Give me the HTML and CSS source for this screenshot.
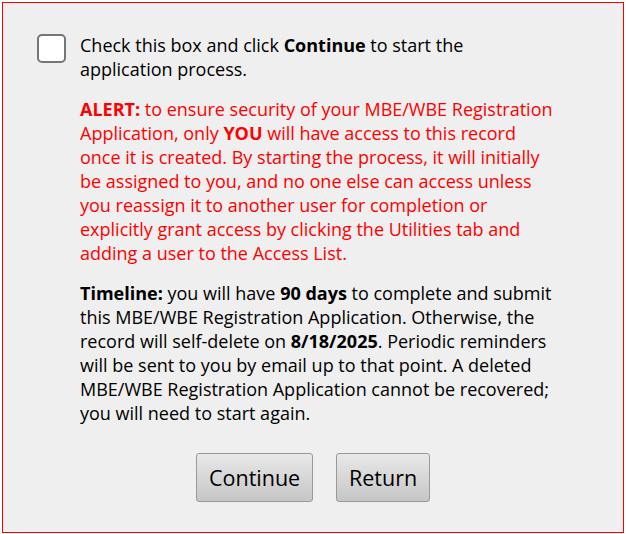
FILE: index.html
```html
<!DOCTYPE html>
<html>
<head>
<meta charset="utf-8">
<link rel="stylesheet" href="styles.css">
</head>
<body>
<div class="panel">
  <div class="row">
    <span class="check" role="checkbox" aria-checked="false"></span>
    <div class="content">
      <p>Check this box and click <b>Continue</b> to start the application process.</p>
      <p class="alert"><b>ALERT:</b> to ensure security of your MBE/WBE Registration Application, only <b>YOU</b> will have access to this record once it is created. By starting the process, it will initially be assigned to you, and no one else can access unless you reassign it to another user for completion or explicitly grant access by clicking the Utilities tab and adding a user to the Access List.</p>
      <p><b>Timeline:</b> you will have <b>90 days</b> to complete and submit this MBE/WBE Registration Application. Otherwise, the record will self-delete on <b>8/18/2025</b>. Periodic reminders will be sent to you by email up to that point. A deleted MBE/WBE Registration Application cannot be recovered; you will need to start again.</p>
    </div>
  </div>
  <div class="actions">
    <button class="btn btn-continue">Continue</button>
    <button class="btn btn-return">Return</button>
  </div>
</div>
</body>
</html>
```
FILE: styles.css
```css
html, body {
  margin: 0;
  padding: 0;
  background: #ffffff;
}
body {
  font-family: "Open Sans", "Liberation Sans", sans-serif;
  color: #000;
}
.panel {
  margin: 2px 2px 1px 2px;
  border: 1px solid #ff0000;
  background: #efefef;
  padding: 30px 0 0 0;
  box-sizing: border-box;
  height: 531px;
}
.row {
  display: flex;
  align-items: flex-start;
  padding-left: 34px;
}
.check {
  flex: 0 0 auto;
  width: 29px;
  height: 29px;
  box-sizing: border-box;
  border: 2px solid #767676;
  border-radius: 5px;
  background: #fff;
  margin-top: 1px;
}
.content {
  margin-left: 14px;
  width: 476px;
}
.content p {
  margin: 0 0 16px 0;
  font-size: 18px;
  line-height: 24px;
}
.content p:last-child {
  margin-bottom: 0;
}
.alert {
  color: #ff0000;
}
.actions {
  display: flex;
  justify-content: center;
  gap: 23px;
  margin-top: 28px;
}
.btn {
  font-family: "Open Sans", "Liberation Sans", sans-serif;
  font-size: 21.5px;
  color: #000;
  height: 49px;
  padding: 0 12px;
  border: 1px solid #999999;
  border-radius: 3px;
  background: linear-gradient(#e8e8e8, #c6c6c6);
}
.btn-continue {
  width: 117px;
}
.btn-return {
  width: 94px;
}
```
